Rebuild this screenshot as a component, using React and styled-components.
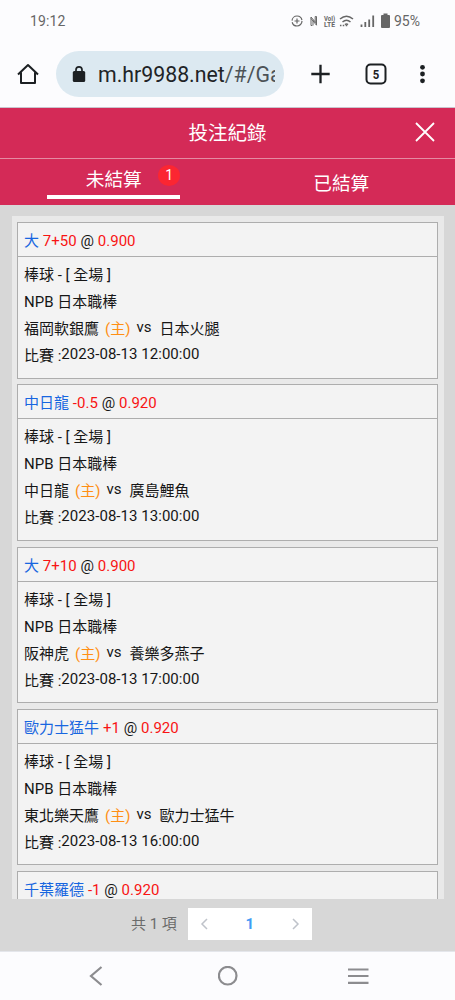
import React from "react";
import styled, { createGlobalStyle } from "styled-components";

const GlobalStyle = createGlobalStyle`
  * { box-sizing: border-box; }
  body { margin: 0; background: #fcfcfe; font-family: Roboto, "Noto Sans CJK TC", sans-serif; }
`;

const Screen = styled.div`
  width: 455px;
  height: 1000px;
  display: flex;
  flex-direction: column;
  overflow: hidden;
  background: #fcfcfe;
`;

const StatusBar = styled.div`
  height: 42px;
  flex: none;
  display: flex;
  align-items: center;
  justify-content: space-between;
  padding: 0 35px 0 30px;
  font-size: 14px;
  color: #666;
`;

const Clock = styled.span`
  letter-spacing: 0.1px;
`;

const StatusIcons = styled.div`
  display: flex;
  align-items: center;
  svg { display: block; margin-right: -1px; }
`;

const BrowserBar = styled.div`
  height: 66px;
  flex: none;
  display: flex;
  align-items: center;
  padding: 0 0 2px 17px;
  border-bottom: 1px solid #c9c5ce;
  color: #1c2023;
  svg { display: block; flex: none; }
`;

const AddressPill = styled.div`
  width: 228px;
  height: 46px;
  margin: 0 26px 0 17px;
  padding-left: 16px;
  border-radius: 23px;
  background: #dce9f1;
  display: flex;
  align-items: center;
`;

const Url = styled.span`
  width: 177px;
  margin-left: 12px;
  padding-top: 2px;
  overflow: hidden;
  white-space: nowrap;
  font-size: 21.3px;
  line-height: 30px;
  color: #1f2427;
`;

const UrlPath = styled.span`
  color: #4c5357;
`;

const TitleBar = styled.header`
  height: 51px;
  flex: none;
  display: grid;
  grid-template-columns: 60px 1fr 60px;
  align-items: center;
  background: #d42a57;
  border-bottom: 1px solid #e58aa2;
  color: #fff;
  svg { display: block; justify-self: center; margin-bottom: 2px; }
`;

const Title = styled.h1`
  margin: 0;
  padding-top: 2px;
  text-align: center;
  font-size: 19.5px;
  font-weight: 400;
  line-height: 28px;
`;

const Tabs = styled.nav`
  height: 46px;
  flex: none;
  display: grid;
  grid-template-columns: 1fr 1fr;
  background: #d42a57;
  color: #fff;
  font-size: 18.7px;
  line-height: 28px;
`;

const Tab = styled.div`
  display: flex;
  justify-content: center;
  padding-top: ${(p) => (p.$active ? 7 : 11)}px;
`;

const TabLabel = styled.span`
  position: relative;
  width: 133px;
  height: 33px;
  text-align: center;
  border-bottom: ${(p) => (p.$active ? "4px solid #fff" : "0")};
`;

const Badge = styled.span`
  position: absolute;
  top: -1px;
  right: 0;
  width: 22px;
  height: 21px;
  border-radius: 50%;
  background: #fb2632;
  font-size: 14px;
  line-height: 20px;
`;

const Page = styled.main`
  flex: none;
  height: 747px;
  display: flex;
  flex-direction: column;
  background: #d7d7d7;
  border-bottom: 1px solid #e4e6eb;
`;

const List = styled.div`
  height: 683px;
  flex: none;
  margin: 11px 11px 0 12px;
  padding: 6px 6px 0 5px;
  overflow: hidden;
  background: #e9e9e9;
`;

const Card = styled.article`
  height: 156.6px;
  margin-bottom: 5.7px;
  border: 1px solid #adadad;
  background: #f3f3f3;
  font-size: 15px;
  color: #161616;
`;

const CardHead = styled.div`
  height: 34px;
  padding-left: 6px;
  border-bottom: 1px solid #adadad;
  line-height: 36px;
  letter-spacing: 0.03px;
  white-space: pre;
`;

const Pick = styled.span`
  color: #1766e0;
`;

const Odds = styled.span`
  color: #f81414;
`;

const CardBody = styled.div`
  padding: 5px 0 0 6px;
`;

const Line = styled.div`
  height: 27px;
  line-height: 27px;
  display: flex;
  white-space: pre;
`;

const Host = styled.span`
  margin: 0 6px;
  color: #ff8f14;
`;

const Versus = styled.span`
  margin-right: 8px;
  line-height: 23px;
`;

const Time = styled.span`
  line-height: 23px;
  letter-spacing: 0.04px;
`;

const Pager = styled.div`
  display: flex;
  align-items: center;
  margin: 9px 0 0 131px;
  font-size: 15px;
  color: #6b6b6b;
`;

const Total = styled.span`
  padding-bottom: 3px;
`;

const PageBox = styled.div`
  width: 124px;
  height: 32px;
  margin-left: 11px;
  padding: 0 11px;
  display: flex;
  align-items: center;
  justify-content: space-between;
  background: #fff;
`;

const CurrentPage = styled.span`
  color: #419bf5;
  font-weight: 700;
`;

const NavBar = styled.footer`
  flex: 1;
  display: flex;
  align-items: center;
  padding-left: 89px;
  gap: 115px;
  color: #8c8c8f;
`;

const bets = [
  { pick: "大", line: "7+50", odds: "0.900", home: "福岡軟銀鷹", away: "日本火腿", time: "12:00:00" },
  { pick: "中日龍", line: "-0.5", odds: "0.920", home: "中日龍", away: "廣島鯉魚", time: "13:00:00" },
  { pick: "大", line: "7+10", odds: "0.900", home: "阪神虎", away: "養樂多燕子", time: "17:00:00" },
  { pick: "歐力士猛牛", line: "+1", odds: "0.920", home: "東北樂天鷹", away: "歐力士猛牛", time: "16:00:00" },
  { pick: "千葉羅德", line: "-1", odds: "0.920" },
];

function BetCard({ bet }) {
  return (
    <Card>
      <CardHead>
        <Pick>{bet.pick}</Pick> <Odds>{bet.line}</Odds> @ <Odds>{bet.odds}</Odds>
      </CardHead>
      {bet.home && (
        <CardBody>
          <Line>棒球 - [ 全場 ]</Line>
          <Line>NPB 日本職棒</Line>
          <Line>
            {bet.home}
            <Host>(主)</Host>
            <Versus>vs</Versus>
            {bet.away}
          </Line>
          <Line>
            比賽 :<Time>2023-08-13 {bet.time}</Time>
          </Line>
        </CardBody>
      )}
    </Card>
  );
}

function Chevron({ right }) {
  return (
    <svg width="12" height="14" viewBox="0 0 12 14" fill="none" stroke="#bfc3ca" strokeWidth="1.5">
      <path d={right ? "M4 2l5 5-5 5" : "M8 2L3 7l5 5"} />
    </svg>
  );
}

function StatusGlyphs() {
  return (
    <svg width="104" height="18" viewBox="0 0 104 18" fill="none" stroke="#666" strokeWidth="1.2">
      <circle cx="6" cy="9" r="5" strokeDasharray="14 1.7" />
      <path d="M6 6.5v5M3.500 9h5" />
      <path d="M21.300 13.500H20V5l5.500 6.500M22 8v5.500M24.200 4.500h1.300v8.700L20 6.500M24.200 4.500v5.500" strokeWidth="1" />
      <g fill="#666" stroke="none" fontFamily="Roboto" fontWeight="700">
        <text x="33" y="8.800" fontSize="7" textLength="11" lengthAdjust="spacingAndGlyphs">VoI)</text>
        <text x="33" y="14.800" fontSize="7" textLength="11" lengthAdjust="spacingAndGlyphs">LTE</text>
      </g>
      <path d="M49 7q6.500-5.500 13 0M51.500 10q4-3.500 8 0M54 12.600q1.500-1.300 3 0" strokeWidth="1.500" />
      <path d="M49.700 12.700v1.600M52.500 12.700v1.600M55.500 13v1.300" strokeWidth="1.500" />
      <path d="M70.500 15v-2.500M74.300 15v-5M78.200 15V7.500M82.200 15V3.500" strokeWidth="1.800" />
      <path d="M92.500 1.500h4v1.500h1.500a1 1 0 0 1 1 1V15a1 1 0 0 1-1 1h-7a1 1 0 0 1-1-1V4a1 1 0 0 1 1-1h1.500z" fill="#666" stroke="none" />
    </svg>
  );
}

export default function App() {
  return (
    <Screen>
      <GlobalStyle />
      <StatusBar>
        <Clock>19:12</Clock>
        <StatusIcons>
          <StatusGlyphs />
          <span>95%</span>
        </StatusIcons>
      </StatusBar>
      <BrowserBar>
        <svg width="22" height="24" viewBox="0 0 22 24" fill="none" stroke="currentColor" strokeWidth="2">
          <path d="M1 12.500L11 3l10 9.500M4 10.500V21h14V10.500" strokeLinejoin="round" />
        </svg>
        <AddressPill>
          <svg width="14" height="18" viewBox="0 0 14 18" fill="none">
            <path d="M4 7V4.800a3 3 0 0 1 6 0V7" stroke="#1c2023" strokeWidth="1.700" />
            <rect x="0.800" y="6" width="12.400" height="11" rx="1.500" fill="#1c2023" />
          </svg>
          <Url>
            m.hr9988.net<UrlPath>/#/Ga</UrlPath>
          </Url>
        </AddressPill>
        <svg width="115" height="24" viewBox="0 0 115 24" fill="none" stroke="currentColor" strokeWidth="2.300">
          <path d="M1.300 12h18.400M10.500 2.800v18.400" />
          <rect x="56.500" y="2.500" width="19" height="19" rx="4" strokeWidth="2" />
          <text x="66" y="16.700" fontSize="13.500" fontWeight="700" fontFamily="Roboto" textAnchor="middle" textLength="6.500" lengthAdjust="spacingAndGlyphs" fill="currentColor" stroke="none">5</text>
          <g fill="currentColor" stroke="none">
            <circle cx="112.500" cy="5.300" r="2.400" />
            <circle cx="112.500" cy="12" r="2.400" />
            <circle cx="112.500" cy="18.800" r="2.400" />
          </g>
        </svg>
      </BrowserBar>
      <TitleBar>
        <span />
        <Title>投注紀錄</Title>
        <svg width="20" height="20" viewBox="0 0 20 20" fill="none" stroke="#fff" strokeWidth="1.800">
          <path d="M1 1l18 18M19 1L1 19" />
        </svg>
      </TitleBar>
      <Tabs>
        <Tab $active>
          <TabLabel $active>
            未結算<Badge>1</Badge>
          </TabLabel>
        </Tab>
        <Tab>
          <TabLabel>已結算</TabLabel>
        </Tab>
      </Tabs>
      <Page>
        <List>
          {bets.map((bet, i) => (
            <BetCard key={i} bet={bet} />
          ))}
        </List>
        <Pager>
          <Total>共 1 項</Total>
          <PageBox>
            <Chevron />
            <CurrentPage>1</CurrentPage>
            <Chevron right />
          </PageBox>
        </Pager>
      </Page>
      <NavBar>
        <svg width="14" height="20" viewBox="0 0 14 20" fill="none" stroke="currentColor" strokeWidth="2.200">
          <path d="M12.500 1L2 10l10.500 9" />
        </svg>
        <svg width="20" height="20" viewBox="0 0 20 20" fill="none" stroke="currentColor" strokeWidth="2.200">
          <circle cx="9.700" cy="9.700" r="8.800" />
        </svg>
        <svg width="21" height="20" viewBox="0 0 21 20" fill="none" stroke="currentColor" strokeWidth="2.200" style={{ marginLeft: -5 }}>
          <path d="M0 3.500h20.500M0 10h20.500M0 16.800h20.500" />
        </svg>
      </NavBar>
    </Screen>
  );
}
